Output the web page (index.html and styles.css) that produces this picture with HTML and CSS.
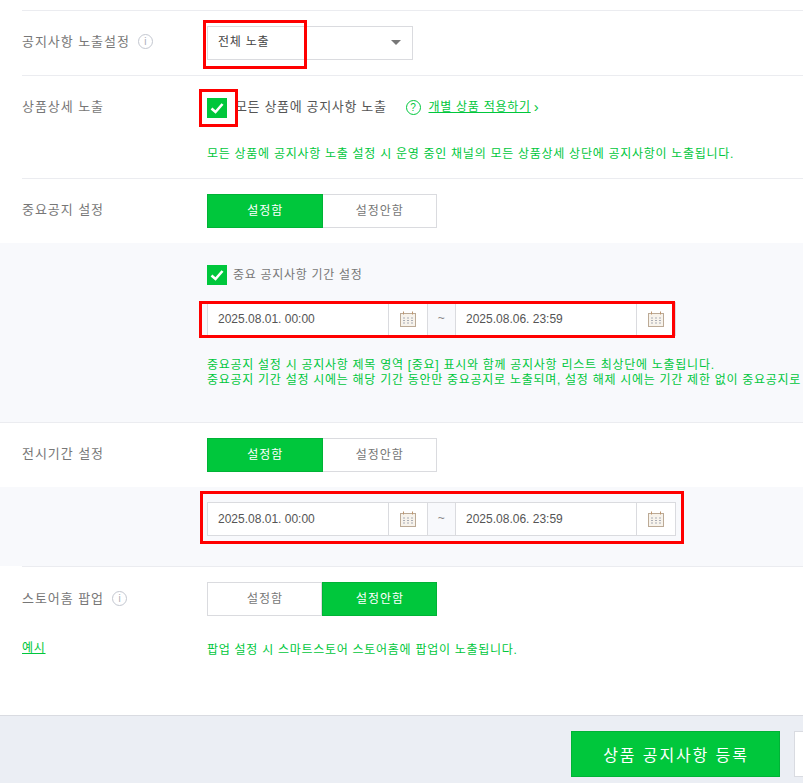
FILE: index.html
```html
<!DOCTYPE html>
<html lang="ko">
<head>
    <meta charset="UTF-8">
    <meta name="viewport" content="width=device-width, initial-scale=1.0">
    <title>상품 공지사항 등록</title>
    <link rel="stylesheet" href="styles.css">
</head>
<body>
    <svg class="defs">
        <symbol id="cal" viewBox="0 0 16 16">
            <rect x="0.5" y="2.5" width="15" height="13" fill="#f7f3ec" stroke="#bcaa96"/>
            <path d="M3.5 0.5v3M12.5 0.5v3" stroke="#bd9771" fill="none"/>
            <path d="M3 7h2M7 7h2M11 7h2M3 9.5h2M7 9.5h2M11 9.5h2M3 12h2M7 12h2M11 12h2" stroke="#a8abb4" fill="none"/>
        </symbol>
    </svg>

    <div class="spacer"></div>

    <div class="row row-select">
        <div class="label">공지사항 노출설정<span class="info">i</span></div>
        <div class="field">
            <div class="select">전체 노출<span class="caret"></span>
                <span class="mark mark-select"></span>
            </div>
        </div>
    </div>

    <div class="row row-detail">
        <div class="label">상품상세 노출</div>
        <div class="field">
            <div class="check-line">
                <span class="check"><svg viewBox="0 0 20 20"><path d="M4.5 10.5l4 3.5 7-8" /></svg><span class="mark mark-check"></span></span>
                <span class="check-text">모든 상품에 공지사항 노출</span>
                <span class="help">?</span>
                <a class="link">개별 상품 적용하기</a><span class="chev">›</span>
            </div>
            <p class="note note-detail">모든 상품에 공지사항 노출 설정 시 운영 중인 채널의 모든 상품상세 상단에 공지사항이 노출됩니다.</p>
        </div>
    </div>

    <div class="row row-toggle">
        <div class="label">중요공지 설정</div>
        <div class="field">
            <div class="toggle"><span class="tg on">설정함</span><span class="tg">설정안함</span></div>
        </div>
    </div>

    <div class="panel panel-important">
        <div class="check-line">
            <span class="check"><svg viewBox="0 0 20 20"><path d="M4.5 10.5l4 3.5 7-8" /></svg></span>
            <span class="check-sub">중요 공지사항 기간 설정</span>
        </div>
        <div class="dates">
            <span class="date">2025.08.01. 00:00</span>
            <span class="cal"><svg><use href="#cal"/></svg></span>
            <span class="tilde">~</span>
            <span class="date">2025.08.06. 23:59</span>
            <span class="cal"><svg><use href="#cal"/></svg></span>
            <span class="mark mark-dates1"></span>
        </div>
        <p class="note note-important">중요공지 설정 시 공지사항 제목 영역 [중요] 표시와 함께 공지사항 리스트 최상단에 노출됩니다.<br>중요공지 기간 설정 시에는 해당 기간 동안만 중요공지로 노출되며, 설정 해제 시에는 기간 제한 없이 중요공지로</p>
    </div>

    <div class="row row-toggle row-display">
        <div class="label">전시기간 설정</div>
        <div class="field">
            <div class="toggle"><span class="tg on">설정함</span><span class="tg">설정안함</span></div>
        </div>
    </div>

    <div class="panel panel-display">
        <div class="dates">
            <span class="date">2025.08.01. 00:00</span>
            <span class="cal"><svg><use href="#cal"/></svg></span>
            <span class="tilde">~</span>
            <span class="date">2025.08.06. 23:59</span>
            <span class="cal"><svg><use href="#cal"/></svg></span>
            <span class="mark mark-dates2"></span>
        </div>
    </div>

    <div class="row row-popup">
        <div class="label">스토어홈 팝업<span class="info">i</span>
            <a class="link link-example">예시</a>
        </div>
        <div class="field">
            <div class="toggle"><span class="tg">설정함</span><span class="tg on">설정안함</span></div>
            <p class="note note-popup">팝업 설정 시 스마트스토어 스토어홈에 팝업이 노출됩니다.</p>
        </div>
    </div>

    <div class="footer">
        <button class="btn-save">상품 공지사항 등록</button>
        <button class="btn-other"></button>
    </div>
</body>
</html>
```

FILE: styles.css
```css
html, body {
    margin: 0;
    padding: 0;
}
body {
    width: 803px;
    height: 783px;
    overflow: hidden;
    background: #fff;
    color: #666;
    font-family: "Liberation Sans", "Noto Sans CJK KR", sans-serif;
    font-size: 12px;
    letter-spacing: 0.55px;
}
.defs {
    display: none;
}
.spacer {
    height: 10px;
}
.row {
    display: flex;
    margin-left: 22px;
    border-top: 1px solid #ebecf0;
    box-sizing: border-box;
}
.label {
    width: 185px;
    flex: none;
    color: #777;
    position: relative;
    font-size: 13px;
    letter-spacing: 0.95px;
}
.field {
    flex: 1;
    min-width: 0;
}
.row-select {
    height: 65px;
    padding-top: 15px;
}
.row-select .label {
    padding-top: 5px;
}
.row-detail {
    height: 103px;
    padding-top: 22px;
}
.row-detail .label {
    margin-top: -2px;
}
.row-toggle {
    height: 65px;
    padding-top: 15px;
}
.row-toggle .label {
    padding-top: 5px;
}
.row-display {
    margin-left: 0;
    padding-left: 22px;
}
.row-popup {
    height: 149px;
    padding-top: 15px;
}
.row-popup .label {
    padding-top: 6px;
}

.info, .help {
    display: inline-block;
    width: 13px;
    height: 13px;
    margin-left: 8px;
    border: 1px solid #c3c7d0;
    border-radius: 50%;
    color: #a9aeb8;
    font-size: 10px;
    line-height: 13px;
    text-align: center;
    letter-spacing: 0;
    vertical-align: 1px;
}
.select {
    position: relative;
    width: 206px;
    height: 34px;
    box-sizing: border-box;
    border: 1px solid #dadbdf;
    padding-left: 10px;
    line-height: 31px;
    color: #444;
    letter-spacing: 0.75px;
}
.caret {
    position: absolute;
    right: 11px;
    top: 13px;
    border-top: 5px solid #777;
    border-left: 5px solid transparent;
    border-right: 5px solid transparent;
}

.check-line {
    display: flex;
    align-items: flex-start;
    line-height: 18px;
}
.panel .check-line {
    line-height: 20px;
}
.check {
    position: relative;
    display: block;
    width: 20px;
    height: 20px;
    background: #00c73c;
    flex: none;
}
.check svg {
    display: block;
    width: 20px;
    height: 20px;
}
.check svg path {
    fill: none;
    stroke: #fff;
    stroke-width: 2.6;
}
.check-text {
    margin-left: 8px;
    color: #555;
    font-size: 13px;
    letter-spacing: 0.65px;
}
.check-sub {
    margin-left: 6px;
    color: #777;
    letter-spacing: 0.7px;
}
.check-line .help {
    margin: 2px 8px 0 19px;
    border-color: #00c73c;
    color: #00c73c;
}
.link {
    color: #00c73c;
    text-decoration: underline;
    letter-spacing: 0.72px;
}
.chev {
    margin-left: 3px;
    color: #00c73c;
    font-size: 15px;
}
.link-example {
    position: absolute;
    left: 0;
    top: 56px;
    font-size: 12px;
}
.note {
    margin: 0;
    color: #00c73c;
    line-height: 15px;
    white-space: nowrap;
    letter-spacing: 0.72px;
}
.note-detail {
    margin-top: 29px;
}
.note-popup {
    margin-top: 27px;
}
.note-important {
    margin-top: 22px;
}

.toggle {
    display: flex;
    width: 230px;
    height: 34px;
}
.tg {
    flex: 1;
    box-sizing: border-box;
    border: 1px solid #dadbdf;
    padding-left: 1px;
    line-height: 33px;
    text-align: center;
    color: #777;
    letter-spacing: 0.95px;
}
.tg + .tg {
    border-left: 0;
}
.tg.on {
    background: #00c73c;
    border: 1px solid #00b336;
    color: #fff;
}

.panel {
    background: #f8f9fc;
    padding-left: 207px;
    box-sizing: border-box;
    overflow: hidden;
}
.panel-important {
    height: 179px;
    padding-top: 22px;
}
.panel-display {
    height: 79px;
    padding-top: 15px;
}
.dates {
    position: relative;
    display: flex;
    width: 469px;
    height: 34px;
    box-sizing: border-box;
    border: 1px solid #dadbdf;
    background: #fff;
    line-height: 33px;
    color: #555;
}
.panel-important .dates {
    margin-top: 17px;
}
.date {
    width: 180px;
    padding-left: 10px;
    box-sizing: border-box;
    letter-spacing: 0;
    font-size: 12px;
}
.cal {
    width: 39px;
    box-sizing: border-box;
    border-left: 1px solid #dadbdf;
    display: flex;
    align-items: center;
    justify-content: center;
}
.cal svg {
    width: 16px;
    height: 16px;
}
.tilde {
    width: 29px;
    box-sizing: border-box;
    border-left: 1px solid #dadbdf;
    border-right: 1px solid #dadbdf;
    background: #f8f9fc;
    text-align: center;
    line-height: 30px;
    color: #888;
}

.footer {
    display: flex;
    gap: 14px;
    height: 68px;
    box-sizing: border-box;
    padding: 15px 0 0 571px;
    background: #ebeef4;
    border-top: 1px solid #d9dbe1;
}
.btn-save {
    width: 209px;
    height: 46px;
    flex: none;
    border: 1px solid #00b336;
    padding: 0 0 0 1px;
    background: #00c73c;
    color: #fff;
    font-family: inherit;
    font-size: 16px;
    letter-spacing: 1.9px;
}
.btn-other {
    width: 9px;
    height: 46px;
    flex: none;
    padding: 0;
    border: 1px solid #d9dbe1;
    border-right: 0;
    background: #fff;
}

/* red annotation boxes from the original capture */
.mark {
    position: absolute;
    border: 3px solid #f00;
    box-sizing: border-box;
    pointer-events: none;
}
.mark-select {
    left: -5px;
    top: -7px;
    width: 104px;
    height: 49px;
}
.mark-check {
    left: -8px;
    top: -9px;
    width: 39px;
    height: 38px;
}
.mark-dates1 {
    left: -9px;
    top: -2px;
    width: 476px;
    height: 37px;
}
.mark-dates2 {
    left: -8px;
    top: -12px;
    width: 484px;
    height: 53px;
}
```
